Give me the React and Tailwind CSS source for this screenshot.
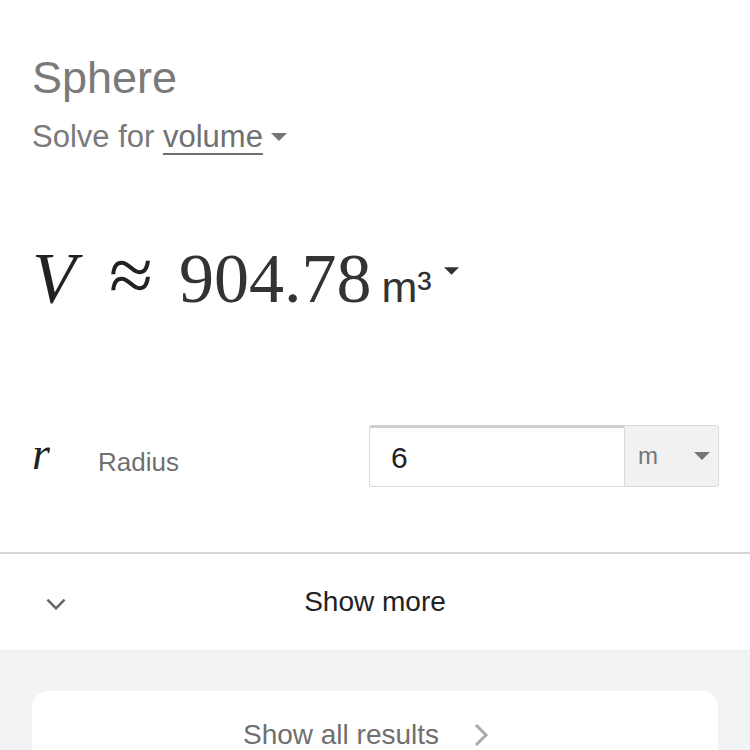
import React from 'react';

const sans = { fontFamily: '"Liberation Sans", Arial, sans-serif' };
const serif = { fontFamily: '"Liberation Serif", "Times New Roman", serif' };

const Caret = ({ className }) => (
  <svg viewBox="0 0 10 5" className={className}>
    <path d="M0 0h10L5 5z" fill="currentColor" />
  </svg>
);

export default function App() {
  return (
    <div className="w-[750px] h-[750px] overflow-hidden bg-white" style={sans}>
      <div className="px-8 pt-[52px]">
        <div className="text-[45px] leading-[52px] text-[#7a7a7a]">Sphere</div>
        <div className="mt-[13px] flex items-center text-[31px] leading-[40px] text-[#7a7a7a]">
          <span>Solve for&nbsp;</span>
          <span className="underline underline-offset-[6px] decoration-2 text-[#707070]">volume</span>
          <Caret className="ml-[8px] w-[16px] h-[8px] text-[#757575]" />
        </div>

        <div className="mt-[67px] flex items-baseline h-[80px]">
          <span className="text-[72px] italic text-[#222] w-[77px]" style={serif}>V</span>
          <span className="text-[80px] leading-none text-[#222] w-[70px]" style={serif}>≈</span>
          <span className="text-[70px] text-[#333]" style={serif}>904.78</span>
          <span className="ml-[10px] text-[43px] text-[#333]">m³</span>
          <Caret className="ml-[12px] w-[15px] h-[8px] text-[#333] self-center mt-[14px]" />
        </div>

        <div className="mt-[121px] flex items-center h-[62px]">
          <span className="text-[46px] italic text-[#222] w-[66px] -mt-[6px]" style={serif}>r</span>
          <span className="text-[26px] text-[#6f6f6f] mt-[12px]">Radius</span>
          <div className="ml-auto -mr-[1px] flex h-[62px]">
            <div className="w-[256px] h-full border border-[#d9d9d9] border-t-[3px] border-t-[#d0d0d0] rounded-l-[3px] bg-white flex items-center pl-[21px] text-[30px] text-[#222]">
              6
            </div>
            <div className="w-[94px] h-full border border-l-0 border-[#d9d9d9] rounded-r-[3px] bg-[#f1f1f1] flex items-center justify-between pl-[13px] pr-[8px] text-[24px] text-[#757575]">
              <span>m</span>
              <Caret className="w-[16px] h-[8px] text-[#757575]" />
            </div>
          </div>
        </div>
      </div>

      <div className="mt-[65px] border-t-2 border-[#d6d6d6] h-[98px] flex items-center relative">
        <svg viewBox="0 0 24 14" className="absolute left-[45px] top-[44px] w-[22px] h-[12px] text-[#666]">
          <path d="M2 2l10 10 10-10" fill="none" stroke="currentColor" strokeWidth="3" />
        </svg>
        <div className="w-full text-center text-[28px] text-[#222]">Show more</div>
      </div>

      <div className="bg-[#f1f3f4] h-[200px] pt-[40px] px-8 border-t border-[#ececec]">
        <div className="bg-white rounded-[16px] h-[100px] flex justify-center pt-[26px]">
          <div className="flex items-center h-[36px] gap-[34px] text-[28px] text-[#6f6f6f]">
            <span className="ml-[-18px]">Show all results</span>
            <svg viewBox="0 0 16 24" className="w-[16px] h-[24px] text-[#aaa]">
              <path d="M3 2l10 10-10 10" fill="none" stroke="currentColor" strokeWidth="3" />
            </svg>
          </div>
        </div>
      </div>
    </div>
  );
}
